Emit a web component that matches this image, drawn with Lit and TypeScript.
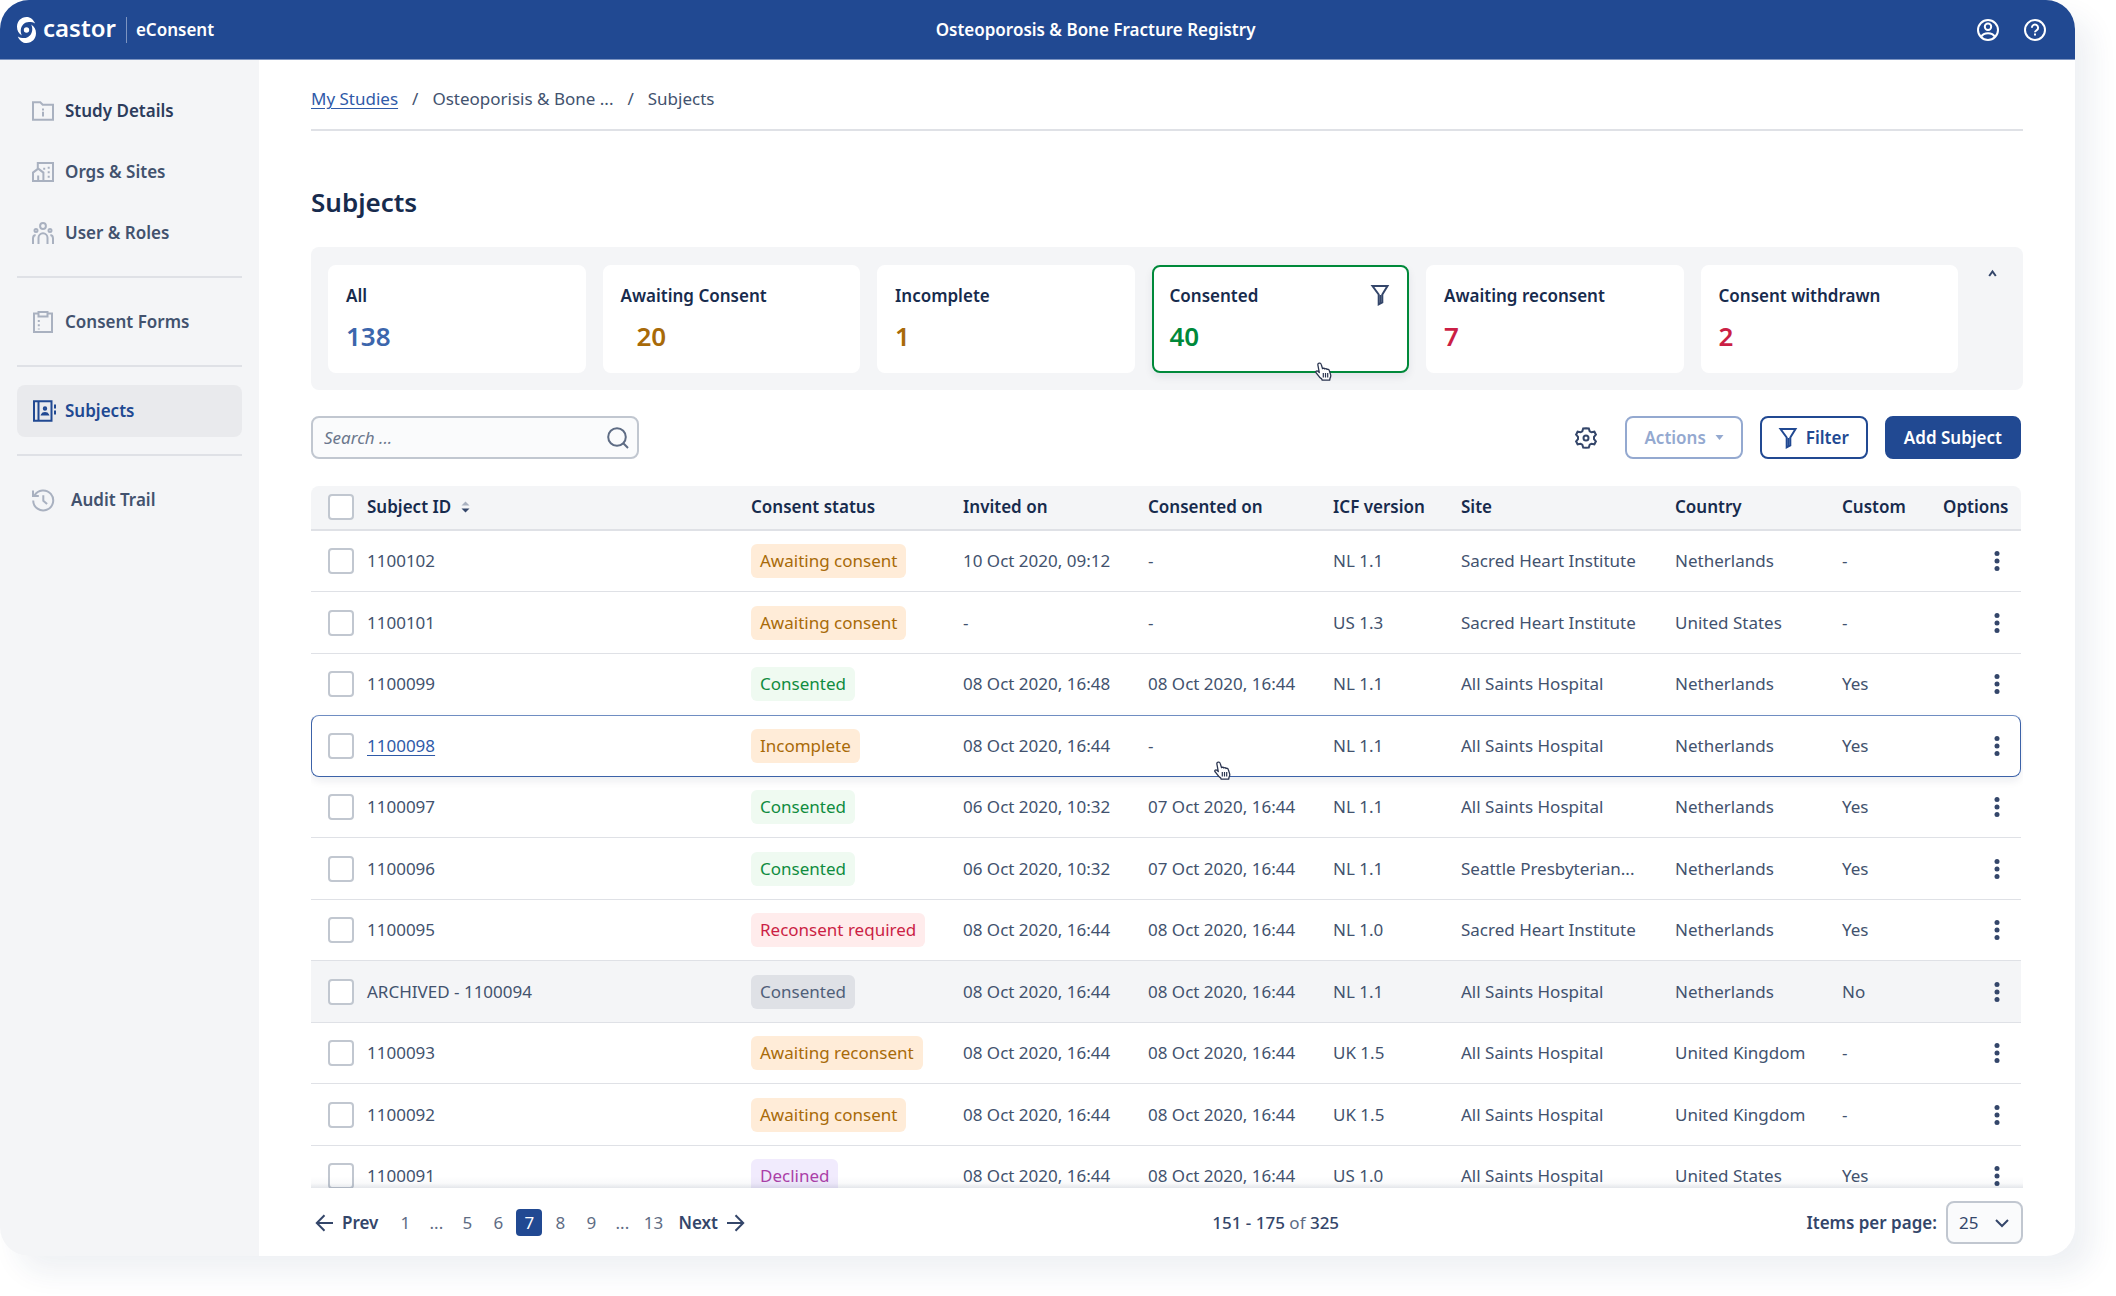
import { LitElement, html, css, svg, nothing, TemplateResult } from "lit";
import { customElement, property } from "lit/decorators.js";
import { classMap } from "lit/directives/class-map.js";

const navy = css`#214992`;

const icons: Record<string, TemplateResult> = {
  study: svg`<path d="M1 2.3h7.3l2.4 2.4H21v15H1z"/><path d="M11 8.6v1.8M11 11.8v4.8"/>`,
  orgs: svg`<path d="M5.800 8V2H21v18H1v-8.400l5.200-4 5.200 4V20M6.200 20v-5.500"/><path stroke-dasharray="2 2.500" d="M12.200 6.700v3M16.700 5.700v12"/>`,
  users: svg`<circle cx="11" cy="4" r="2.900"/><circle cx="4" cy="8.600" r="1.500"/><circle cx="18" cy="8.600" r="1.500"/><path d="M6.500 22v-6.200a4.500 4.500 0 0 1 9 0V22M1 22v-5.500c0-2 .8-3.300 2.600-3.500M21 22v-5.500c0-2-.8-3.300-2.600-3.500"/>`,
  forms: svg`<path d="M6 2.500H2V21h18V2.500h-4M6.500 1h9v4.500h-9z"/><path stroke-dasharray="2 2.200" d="M6.800 9v9.500"/>`,
  subjects: svg`<path d="M2 1.200h17.500v19.600H2zM6.500 1v20"/><path d="M23 4.500v4M23 10.500v4"/><circle cx="13" cy="8.500" r="1.200"/><path d="M10 14.500h6c-.8-2-5.200-2-6 0z"/>`,
  audit: svg`<path d="M2.500 6.500A10 10 0 1 1 1.200 11.500M1 1.500v5.500h5.800M11.300 6.200v5.600l3.800 3.300"/>`,
  funnel: svg`<path d="M1.500 2h15l-5.200 8.500v7.800l-3.600 2v-9.800z"/><path d="M9.500 11v8"/>`,
  search: svg`<circle cx="10" cy="10" r="8.800"/><path d="M16.300 16.300 21 21"/>`,
  gear: svg`<path d="M11 1.200l2.800.2.900 2.900 1.700 1 3-.6 1.500 3-1.900 2.200v2.200l1.900 2.200-1.500 3-3-.6-1.700 1-.9 2.900-2.800.2-2.800-.2-.9-2.900-1.700-1-3 .6-1.500-3L3 12.100V9.900L1.100 7.700l1.500-3 3 .6 1.700-1 .9-2.900z"/><circle cx="11" cy="11" r="2.500"/>`,
  user: svg`<circle cx="11" cy="11" r="10"/><circle cx="11" cy="7.800" r="3.200"/><path d="M4.200 17.800c2.500-4.600 11.100-4.600 13.600 0"/>`,
  help: svg`<circle cx="11" cy="11" r="10"/><path d="M7.900 8.700a3.100 3.100 0 1 1 4.800 2.500c-1.200.8-1.700 1.100-1.700 2.100M11 14.500v2"/>`,
  left: svg`<path d="M18 9H2M9.500 1.200 1.800 9l7.700 7.800"/>`,
  right: svg`<path d="M0 9h16M8.500 1.200 16.200 9l-7.700 7.800"/>`,
  down: svg`<path d="M1 2l6 6 6-6"/>`,
  up: svg`<path d="M1.200 7 4.500 2.500 7.800 7"/>`,
};

const icon = (name: string, w = 22, h = 22) => html`<svg
  class="icon icon-${name}" width=${w} height=${h} viewBox="0 0 ${w} ${h}" aria-hidden="true"
>${icons[name]}</svg>`;

const hand = html`<svg class="hand" width="17" height="19" viewBox="0 0 17 19" aria-hidden="true">
  <path d="M4 1.200c1-.4 1.900.1 2.200 1.200l1.400 4.300c.6-.7 1.800-.6 2.200.3.700-.6 1.800-.4 2.200.5.800-.5 1.900-.2 2.200.8l1.400 4.300c.4 1.400 0 2.700-.6 3.700l-.3 1.900H7.200l-.5-1.300c-1.600-1-3-2.600-4.100-4.300L.9 10.500c-.5-1.100.6-2 1.700-1.400l1.700 1.400L2.900 3.100c-.2-.9.200-1.600 1.100-1.900z"
    fill="#fff" stroke="#2b3550" stroke-width="1.300" stroke-linejoin="round"/>
  <path d="M8.300 11v4.500M10.500 11v4.500M12.700 11v4.500" stroke="#2b3550" stroke-width="1.200"/>
</svg>`;

const iconStyles = css`
  .icon {
    display: block;
    flex: none;
    fill: none;
    stroke: currentColor;
    stroke-width: 2;
    overflow: visible;
  }
`;

const base = css`
  * { box-sizing: border-box; }
  button, input, select { font: inherit; color: inherit; margin: 0; }
  button { cursor: pointer; }
`;

const logoArm = "M18.200 6.600C16.500 2.600 13.400 0 9.600 0 4 0 0 4.400 0 9.800c0 3.800 1.600 6.800 4.800 8.800-.9-2.100-1.200-3.800-1-5.800C4.200 8.400 7.600 5 12 5c2.500 0 4.400.4 6.200 1.600z";

@customElement("app-header")
export class AppHeader extends LitElement {
  static styles = [base, iconStyles, css`
    :host {
      display: flex;
      align-items: center;
      justify-content: space-between;
      height: 60px;
      padding: 0 29px 0 17px;
      border-bottom: 1px solid #7d94c1;
      background: ${navy};
      color: #fff;
      font-weight: 600;
    }
    .brand { display: flex; align-items: center; color: inherit; text-decoration: none; }
    .logo { display: block; fill: #fff; margin-right: 7px; }
    .name { font-size: 24px; line-height: 26px; font-weight: 600; padding-bottom: 4px; }
    .product { border-left: 1px solid #7d94c1; margin-left: 10px; padding-left: 9px; line-height: 26px; }
    .tools { display: flex; gap: 25px; }
    .tools button { padding: 0; border: 0; background: none; }
  `];
  render() {
    return html`
      <a class="brand" href="#">
        <svg class="logo" width="19" height="26" viewBox="0 0 19 26" aria-hidden="true">
          <path d=${logoArm} />
          <path transform="rotate(180 9.500 13)" d=${logoArm} />
          <circle cx="9.500" cy="13" r="2.700"/>
        </svg>
        <span class="name">castor</span>
        <span class="product">eConsent</span>
      </a>
      <span>Osteoporosis &amp; Bone Fracture Registry</span>
      <div class="tools">
        <button aria-label="Account">${icon("user")}</button>
        <button aria-label="Help">${icon("help")}</button>
      </div>`;
  }
}

@customElement("app-nav")
export class AppNav extends LitElement {
  static styles = [base, iconStyles, css`
    :host { display: block; padding: 25px 17px; background: #f4f5f7; font-weight: 600; }
    nav { display: flex; flex-direction: column; gap: 9px; }
    a {
      display: flex;
      align-items: center;
      gap: 11px;
      height: 52px;
      padding: 0 15px;
      border-radius: 8px;
      color: #42526e;
      text-decoration: none;
    }
    a .icon { color: #a9b1c0; }
    .strong { color: #2c3c5c; }
    .active, .active .icon { color: ${navy}; }
    .active { background: #e9eaed; }
    .wide { gap: 17px; }
    hr { width: 100%; height: 2px; margin: 8px 0 9px; border: 0; background: #dfe1e6; }
  `];
  render() {
    return html`<nav aria-label="Main">
      <a class="strong" href="#details">${icon("study")}Study Details</a>
      <a href="#orgs">${icon("orgs")}Orgs &amp; Sites</a>
      <a href="#users">${icon("users")}User &amp; Roles</a>
      <hr />
      <a href="#forms">${icon("forms")}Consent Forms</a>
      <hr />
      <a class="active" href="#subjects" aria-current="page">${icon("subjects")}Subjects</a>
      <hr />
      <a class="wide" href="#audit">${icon("audit")}Audit Trail</a>
    </nav>`;
  }
}

interface Stat { label: string; value: number; tone: string; picked?: boolean; indent?: boolean }

const stats: Stat[] = [
  { label: "All", value: 138, tone: "blue" },
  { label: "Awaiting Consent", value: 20, tone: "amber", indent: true },
  { label: "Incomplete", value: 1, tone: "amber" },
  { label: "Consented", value: 40, tone: "green", picked: true },
  { label: "Awaiting reconsent", value: 7, tone: "red" },
  { label: "Consent withdrawn", value: 2, tone: "red" },
];

@customElement("status-cards")
export class StatusCards extends LitElement {
  static styles = [base, iconStyles, css`
    :host {
      display: flex;
      align-items: flex-start;
      padding: 18px 17px 17px;
      border-radius: 8px;
      background: #f4f5f7;
    }
    .cards { flex: 1; display: grid; grid-template-columns: repeat(6, 1fr); gap: 17px; }
    .card {
      position: relative;
      display: flex;
      justify-content: space-between;
      align-items: flex-start;
      height: 108px;
      padding: 17px 16px;
      border: 2px solid #fff;
      border-radius: 8px;
      background: #fff;
      text-align: left;
      color: #172b4d;
      font-weight: 600;
    }
    .picked { border-color: #00893a; box-shadow: 0 4px 8px #091e4214; }
    .icon-funnel { color: #34466a; margin-right: 2px; }
    .label { display: block; line-height: 24px; }
    .value { display: block; font-size: 26px; line-height: 32px; margin-top: 12px; }
    .indent { padding-left: 16px; }
    .blue { color: #3c66ac; }
    .amber { color: #a86a08; }
    .green { color: #00893a; }
    .red { color: #cb1f45; }
    .hand { position: absolute; right: 75px; bottom: -10px; }
    .fold { padding: 4px 8px; border: 0; background: none; color: #34466a; margin: 0 1px 0 22px; }
  `];
  render() {
    return html`
      <div class="cards">
        ${stats.map((s) => html`
          <button class=${classMap({ card: true, picked: !!s.picked })} aria-pressed=${s.picked ? "true" : "false"}>
            <span>
              <span class="label">${s.label}</span>
              <span class=${classMap({ value: true, [s.tone]: true, indent: !!s.indent })}>${s.value}</span>
            </span>
            ${s.picked ? html`${icon("funnel", 18, 22)}${hand}` : nothing}
          </button>`)}
      </div>
      <button class="fold" aria-label="Collapse">${icon("up", 9, 9)}</button>`;
  }
}

type Row = [id: string, status: string, tone: string, invited: string, consented: string, icf: string, site: string, country: string, custom: string, kind?: string];

const A = "08 Oct 2020, 16:44";
const hospital = "All Saints Hospital";
const heart = "Sacred Heart Institute";
const rows: Row[] = [
  ["1100102", "Awaiting consent", "amber", "10 Oct 2020, 09:12", "-", "NL 1.1", heart, "Netherlands", "-"],
  ["1100101", "Awaiting consent", "amber", "-", "-", "US 1.3", heart, "United States", "-"],
  ["1100099", "Consented", "green", "08 Oct 2020, 16:48", A, "NL 1.1", hospital, "Netherlands", "Yes"],
  ["1100098", "Incomplete", "amber", A, "-", "NL 1.1", hospital, "Netherlands", "Yes", "hovered"],
  ["1100097", "Consented", "green", "06 Oct 2020, 10:32", "07 Oct 2020, 16:44", "NL 1.1", hospital, "Netherlands", "Yes"],
  ["1100096", "Consented", "green", "06 Oct 2020, 10:32", "07 Oct 2020, 16:44", "NL 1.1", "Seattle Presbyterian...", "Netherlands", "Yes"],
  ["1100095", "Reconsent required", "red", A, A, "NL 1.0", heart, "Netherlands", "Yes"],
  ["ARCHIVED - 1100094", "Consented", "grey", A, A, "NL 1.1", hospital, "Netherlands", "No", "archived"],
  ["1100093", "Awaiting reconsent", "amber", A, A, "UK 1.5", hospital, "United Kingdom", "-"],
  ["1100092", "Awaiting consent", "amber", A, A, "UK 1.5", hospital, "United Kingdom", "-"],
  ["1100091", "Declined", "purple", A, A, "US 1.0", hospital, "United States", "Yes"],
];

@customElement("subject-table")
export class SubjectTable extends LitElement {
  @property({ attribute: false }) rows: Row[] = rows;

  static styles = [base, css`
    :host { display: block; position: relative; overflow: hidden; }
    :host::after {
      content: "";
      position: absolute;
      inset: auto 0 0 0;
      height: 12px;
      background: linear-gradient(#091e4200, #091e4206 60%, #091e421c);
    }
    .frame { padding-right: 2px; }
    table { width: 100%; table-layout: fixed; border-collapse: separate; border-spacing: 0; }
    th, td { padding: 0; text-align: left; white-space: nowrap; vertical-align: middle; }
    th {
      height: 45px;
      padding-bottom: 1px;
      background: #f4f5f7;
      border-bottom: 2px solid #dfe1e6;
      color: #172b4d;
      font-weight: 600;
    }
    th:first-child { border-top-left-radius: 8px; }
    th:last-child { border-top-right-radius: 8px; }
    td { border-bottom: 1px solid #dfe1e6; color: #42526e; }
    tbody tr { height: 61px; }
    tbody tr:nth-child(even) { height: 62px; }
    .c-check { width: 56px; }
    .c-status { width: 212px; }
    .c-date { width: 185px; }
    .c-icf { width: 128px; }
    .c-site { width: 214px; }
    .c-country { width: 167px; }
    .c-custom { width: 101px; }
    .c-options { width: 78px; }
    .check { padding-left: 17px; }
    input {
      display: block;
      appearance: none;
      width: 26px;
      height: 26px;
      border: 2px solid #c1c7d0;
      border-radius: 4px;
      background: #fff;
    }
    .sort {
      display: inline-flex;
      align-items: center;
      gap: 10px;
      padding: 0;
      border: 0;
      background: none;
    }
    .badge { display: inline-block; vertical-align: middle; height: 34px; padding: 0 9px; border-radius: 6px; line-height: 34px; }
    .amber { color: #a86a08; background: #ffecd8; }
    .green { color: #0f8c40; background: #effaf1; }
    .red { color: #cb1f45; background: #ffecec; }
    .grey { color: #505f79; background: #dfe1e6; }
    .purple { color: #ab3fa8; background: #f1ebfd; }
    .hovered { position: relative; border-radius: 8px; box-shadow: 0 4px 8px #091e4214; }
    .hovered td { border-top: 1px solid #6f8dc2; border-bottom-color: #3c62a8; }
    .hovered td:first-child { border-left: 1px solid #3c62a8; border-radius: 8px 0 0 8px; padding-left: 16px; }
    .hovered td:last-child { border-right: 1px solid #3c62a8; border-radius: 0 8px 8px 0; }
    tr:has(+ .hovered) td { border-bottom-color: #fff; }
    .hovered a { color: #2f5aa8; text-underline-offset: 3px; }
    .archived td { background: #f4f5f7; }
    .more { display: block; margin-left: 43px; padding: 0; border: 0; background: none; }
    .more svg { display: block; fill: #34466a; }
    .anchor { position: relative; }
    .hand { position: absolute; left: 66px; bottom: -4px; }
  `];

  render() {
    return html`<div class="frame"><table>
      <colgroup>
        <col class="c-check" /><col /><col class="c-status" /><col class="c-date" /><col class="c-date" />
        <col class="c-icf" /><col class="c-site" /><col class="c-country" /><col class="c-custom" /><col class="c-options" />
      </colgroup>
      <thead>
        <tr>
          <th class="check"><input type="checkbox" aria-label="Select all subjects" /></th>
          <th><button class="sort">Subject ID
            <svg width="9" height="12" viewBox="0 0 8 12" aria-hidden="true">
              <path d="M0 4.500 4 .5l4 4z" fill="#a9b1c0"/><path d="M0 7.500h8l-4 4z" fill="#34466a"/>
            </svg></button></th>
          <th>Consent status</th><th>Invited on</th><th>Consented on</th><th>ICF version</th>
          <th>Site</th><th>Country</th><th>Custom</th><th>Options</th>
        </tr>
      </thead>
      <tbody>
        ${this.rows.map(([id, status, tone, invited, consented, icf, site, country, custom, kind]) => html`
          <tr class=${kind ?? ""}>
            <td class="check"><input type="checkbox" aria-label="Select ${id}" /></td>
            <td>${kind === "hovered" ? html`<a href="#${id}">${id}</a>` : id}</td>
            <td><span class="badge ${tone}">${status}</span></td>
            <td>${invited}</td>
            <td class=${kind === "hovered" ? "anchor" : ""}>${consented}${kind === "hovered" ? hand : nothing}</td>
            <td>${icf}</td><td>${site}</td><td>${country}</td><td>${custom}</td>
            <td><button class="more" aria-label="Options for ${id}">
              <svg width="22" height="22" viewBox="0 0 22 22" aria-hidden="true">
                <circle cx="11" cy="3.400" r="2.500"/><circle cx="11" cy="11" r="2.500"/><circle cx="11" cy="18.600" r="2.500"/>
              </svg></button></td>
          </tr>`)}
      </tbody>
    </table></div>`;
  }
}

@customElement("page-footer")
export class PageFooter extends LitElement {
  static styles = [base, iconStyles, css`
    :host {
      display: flex;
      justify-content: space-between;
      align-items: center;
      padding: 13px 0 12px;
      color: #5e6c84;
    }
    nav { display: flex; align-items: center; }
    a { text-decoration: none; }
    .pages { display: flex; gap: 5px; margin: 0 12px 0 14px; }
    .pages a, .pages span { min-width: 26px; text-align: center; line-height: 27px; color: #5e6c84; }
    .pages .current { background: ${navy}; color: #fff; border-radius: 4px; }
    .step { display: flex; align-items: center; gap: 9px; color: #34466a; font-weight: 600; }
    .prev { padding-left: 4px; }
    b { font-weight: 500; color: #34466a; }
    .size { display: flex; align-items: center; gap: 9px; font-weight: 600; color: #34466a; }
    .pick { position: relative; display: block; }
    select {
      appearance: none;
      display: block;
      width: 77px;
      height: 43px;
      padding: 0 11px;
      border: 2px solid #c1c7d0;
      border-radius: 8px;
      background: #fafbfc;
      font-weight: 400;
    }
    .pick .icon { position: absolute; right: 14px; top: 17px; pointer-events: none; }
  `];
  render() {
    return html`
      <nav aria-label="Pages">
        <a class="step prev" href="#prev">${icon("left", 18, 18)}Prev</a>
        <div class="pages">
          <a href="#1">1</a><span>...</span><a href="#5">5</a><a href="#6">6</a>
          <a class="current" href="#7" aria-current="page">7</a>
          <a href="#8">8</a><a href="#9">9</a><span>...</span><a href="#13">13</a>
        </div>
        <a class="step" href="#next">Next${icon("right", 18, 18)}</a>
      </nav>
      <span><b>151 - 175</b> of <b>325</b></span>
      <div class="size">
        <label for="size">Items per page:</label>
        <span class="pick">
          <select id="size"><option>25</option><option>50</option><option>100</option></select>
          ${icon("down", 14, 10)}
        </span>
      </div>`;
  }
}

@customElement("app-root")
export class AppRoot extends LitElement {
  static styles = [base, iconStyles, css`
    :host {
      display: flex;
      height: 100vh;
      padding: 0 41px 40px 0;
      box-sizing: border-box;
      background: #fff;
      font-family: "Noto Sans", "Open Sans", sans-serif;
      font-size: 17px;
      line-height: 24px;
      color: #42526e;
    }
    .window {
      flex: 1;
      min-width: 0;
      display: grid;
      grid-template-rows: auto minmax(0, 1fr);
      grid-template-columns: 259px minmax(0, 1fr);
      border-radius: 29px;
      background: #fff;
      box-shadow: 17px 17px 28px #1e326412;
      overflow: hidden;
    }
    app-header { grid-column: 1 / -1; }
    main { display: flex; flex-direction: column; min-width: 0; padding: 27px 52px 0; }
    .crumbs { display: flex; gap: 14px; padding-bottom: 18px; border-bottom: 2px solid #dfe1e6; }
    .crumbs a { color: #2f5aa8; text-underline-offset: 3px; }
    h1 { margin: 55px 0 29px; font-size: 26px; line-height: 32px; font-weight: 600; color: #172b4d; }
    .toolbar { display: flex; align-items: center; gap: 17px; margin: 26px 2px 27px 0; }
    .search { position: relative; display: block; margin-right: auto; }
    .search input {
      display: block;
      width: 328px;
      height: 43px;
      padding: 0 40px 0 11px;
      border: 2px solid #c1c7d0;
      border-radius: 8px;
      background: #fafbfc;
    }
    .search input::placeholder { color: #6b778c; font-style: italic; opacity: 1; }
    .search .icon { position: absolute; right: 10px; top: 11px; color: #5e6c84; }
    .gear { padding: 0; margin-right: 11px; border: 0; background: none; color: #34466a; }
    .btn {
      display: flex;
      align-items: center;
      gap: 9px;
      height: 43px;
      padding: 0 17px;
      border: 2px solid ${navy};
      border-radius: 8px;
      background: #fff;
      color: ${navy};
      font-weight: 600;
    }
    .btn:disabled { color: #94a9d0; border-color: #94a9d0; cursor: default; }
    .primary { background: ${navy}; color: #fff; }
    .caret { display: block; fill: currentColor; }
    subject-table { flex: 1; min-height: 0; }
  `];
  render() {
    return html`<div class="window">
      <app-header></app-header>
      <app-nav></app-nav>
      <main>
        <nav class="crumbs" aria-label="Breadcrumb">
          <a href="#studies">My Studies</a><span>/</span><span>Osteoporisis &amp; Bone ...</span><span>/</span><span>Subjects</span>
        </nav>
        <h1>Subjects</h1>
        <status-cards></status-cards>
        <div class="toolbar">
          <div class="search">
            <input type="text" placeholder="Search ..." aria-label="Search subjects" />
            ${icon("search")}
          </div>
          <button class="gear" aria-label="Table settings">${icon("gear")}</button>
          <button class="btn" disabled>Actions
            <svg class="caret" width="9" height="5" viewBox="0 0 9 5" aria-hidden="true"><path d="M.5 0h8l-4 5z"/></svg>
          </button>
          <button class="btn">${icon("funnel", 18, 22)}Filter</button>
          <button class="btn primary">Add Subject</button>
        </div>
        <subject-table></subject-table>
        <page-footer></page-footer>
      </main>
    </div>`;
  }
}
